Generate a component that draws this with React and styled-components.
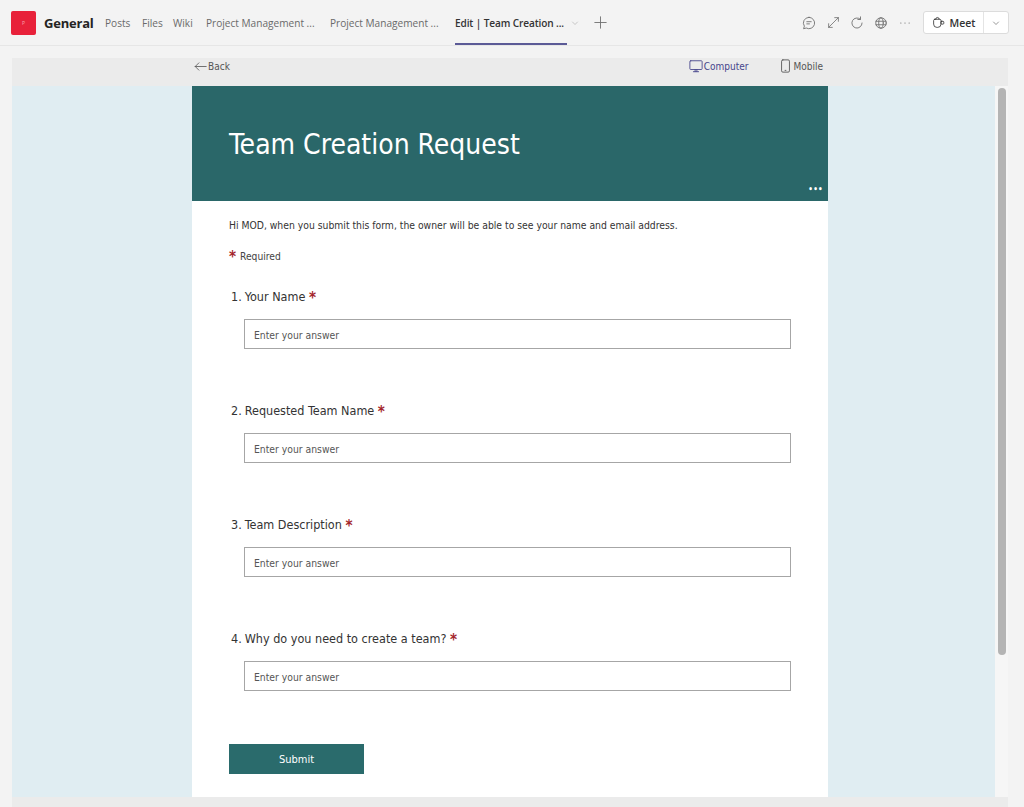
import React from "react";
import styled, { createGlobalStyle } from "styled-components";

const Global = createGlobalStyle`
  html, body { margin: 0; height: 100%; background: #f3f3f3; overflow: hidden; }
  #root { height: 100%; }
  * { box-sizing: border-box; }
`;
const Page = styled.div`
  width: 1024px; height: 807px; display: flex; flex-direction: column; background: #f3f3f3;
  font-family: "Open Sans", "Noto Sans", sans-serif; color: #252423;
`;
const TopBar = styled.header`
  height: 46px; flex: none; display: flex; align-items: center; padding: 0 15px 0 11px;
  border-bottom: 1px solid #e6e6e6; margin-bottom: 12px;
`;
const Logo = styled.div`
  width: 25px; height: 24px; border-radius: 2px; background: #e8213a; color: #f7a0aa;
  font-size: 5px; display: flex; align-items: center; justify-content: center; margin-right: 8px;
`;
const Channel = styled.div`
  font-size: 13px; font-weight: 700; color: #252423; margin-right: 11px; letter-spacing: -0.2px; width: 50px; white-space: nowrap;
`;
const Tab = styled.div`
  position: relative; height: 45px; display: flex; align-items: center; flex: none;
  font-size: 10.1px; white-space: nowrap;
  margin-right: ${p => p.$gap}px; width: ${p => p.$w}px;
  letter-spacing: ${p => p.$active ? "-0.12px" : "0"};
  color: ${p => p.$active ? "#333" : "#6a6a6a"}; font-weight: ${p => p.$active ? 600 : 400};
  ${p => p.$active && `&::after { content: ""; position: absolute; left: 0; right: 0; bottom: 0; height: 2px; background: #5b5a96; }`}
`;
const Spacer = styled.div`flex: 1;`;
const IconBtn = styled.span`
  display: inline-flex; flex: none; width: ${p => p.$w || 24}px; justify-content: center; color: ${p => p.$c || "#6e6e6e"};
`;
const MeetGroup = styled.div`
  display: flex; height: 23px; width: 86px; margin-left: 6px; background: #fff; border: 1px solid #dcdcdc;
  border-radius: 3px; font-size: 10.5px; font-weight: 600; color: #333;
`;
const MeetMain = styled.div`
  flex: 1; display: flex; align-items: center; justify-content: center; gap: 5px; border-right: 1px solid #e4e4e4;
`;
const MeetCaret = styled.div`width: 24px; display: flex; align-items: center; justify-content: center;`;
const Frame = styled.main`
  margin: 0 16px 0 12px; flex: 1; display: flex; flex-direction: column; min-height: 0;
`;
const Toolbar = styled.div`
  height: 28px; flex: none; background: #ebebeb; display: flex; align-items: center;
  padding: 0 185px 12px 182px; font-family: "DejaVu Sans Condensed", "DejaVu Sans", sans-serif; font-size: 10px; color: #555;
`;
const ToolItem = styled.div`
  display: flex; align-items: center; gap: ${p => p.$gap}px; color: ${p => p.$active ? "#46458c" : "#555"};
  margin-left: ${p => p.$ml || 0}px;
`;
const Body = styled.div`flex: 1; display: flex; min-height: 0; background: #e0edf2;`;
const Canvas = styled.div`flex: 1; padding-left: 180px; overflow: hidden;`;
const Track = styled.div`width: 13px; flex: none; background: #f6f6f6; padding: 2px 2px 0 3px;`;
const Thumb = styled.div`height: 567px; background: #b4b4b4; border-radius: 4px;`;
const Form = styled.div`
  width: 636px; height: 100%; background: #fff; font-family: "DejaVu Sans Condensed", "DejaVu Sans", sans-serif; color: #333;
`;
const Banner = styled.div`
  position: relative; height: 115px; background: #2a6769; color: #fff; display: flex; align-items: center; padding: 2px 0 0 37px;
`;
const Title = styled.h1`margin: 0; font-size: 28px; font-weight: 400;`;
const More = styled.span`position: absolute; right: 5px; bottom: 3px; font-size: 8px; font-weight: 700; line-height: 16px; letter-spacing: 0.3px;`;
const Content = styled.div`padding: 16px 37px 0;`;
const Intro = styled.div`font-size: 10.3px; line-height: 16px; color: #333;`;
const Required = styled.div`display: flex; align-items: center; gap: 4px; margin-top: 16px; font-size: 10.2px; line-height: 16px; color: #444;`;
const Star = styled.span`color: #a4262c; font-size: 15px; line-height: 14px; font-weight: 700; vertical-align: -2px;`;
const Question = styled.div`margin-top: ${p => p.$first ? 21 : 0}px; height: 114px; padding-left: 2px;`;
const Label = styled.div`display: flex; gap: 3px; font-size: 12.5px; line-height: 20px; height: 21px; padding-top: 1px; color: #333;`;
const Answer = styled.input`
  display: block; margin: 12px 0 0 13px; width: 547px; height: 30px; border: 1px solid #a6a6a6; padding: 2px 9px 0; outline: none; background: #fff;
  font: 400 10.3px "DejaVu Sans Condensed", "DejaVu Sans", sans-serif;
  &::placeholder { color: #555; opacity: 1; }
`;
const Submit = styled.button`
  display: block; margin-top: 2px; width: 135px; height: 30px; border: 0; background: #2a6b6c; color: #fff;
  font: 400 11px "DejaVu Sans Condensed", "DejaVu Sans", sans-serif;
`;
const Footer = styled.div`height: 10px; flex: none; background: #ebebeb;`;

const Icon = ({ w = 14, h = 14, vb = "0 0 16 16", sw = 1, children }) => (
  <svg width={w} height={h} viewBox={vb} fill="none" stroke="currentColor" strokeWidth={sw} strokeLinecap="round" strokeLinejoin="round">{children}</svg>
);
const questions = ["Your Name", "Requested Team Name", "Team Description", "Why do you need to create a team?"];

export default function App() {
  return (
    <Page>
      <Global />
      <TopBar>
        <Logo>P</Logo>
        <Channel>General</Channel>
        <Tab $w={25} $gap={12}>Posts</Tab>
        <Tab $w={20} $gap={11}>Files</Tab>
        <Tab $w={21} $gap={12}>Wiki</Tab>
        <Tab $w={108} $gap={16}>Project Management ...</Tab>
        <Tab $w={108} $gap={17}>Project Management ...</Tab>
        <Tab $active $w={112} $gap={0}>Edit | Team Creation ...</Tab>
        <IconBtn $c="#999" $w={16}><Icon w={8} h={8}><path d="M3 6l5 5 5-5" /></Icon></IconBtn>
        <IconBtn $w={34}><Icon w={13} h={13} sw={1.1}><path d="M8 1v14M1 8h14" /></Icon></IconBtn>
        <Spacer />
        <IconBtn><Icon><path d="M8 1.500a6.500 6.500 0 1 1-3.200 12.200L1.800 14.600l.9-3A6.500 6.500 0 0 1 8 1.500z" /><path d="M5.500 6.500h5M5.500 9h3" /></Icon></IconBtn>
        <IconBtn><Icon w={13} h={13}><path d="M9.500 2H14v4.500M14 2L2 14M2 9.500V14h4.500" /></Icon></IconBtn>
        <IconBtn><Icon><path d="M13.800 8A5.800 5.800 0 1 1 11.800 3.600" /><path d="M12 1v3H9" /></Icon></IconBtn>
        <IconBtn><Icon><circle cx="8" cy="8" r="6" /><ellipse cx="8" cy="8" rx="2.600" ry="6" /><path d="M2.200 6h11.600M2.200 10h11.600" /></Icon></IconBtn>
        <IconBtn $c="#555"><Icon w={12} h={12} sw={1.4}><path d="M2.500 8h.01M8 8h.01M13.500 8h.01" /></Icon></IconBtn>
        <MeetGroup>
          <MeetMain>
            <Icon w={13} h={13}><path d="M3.500 4h6a1.500 1.500 0 0 1 1.500 1.500V10a4 4 0 0 1-4 4H6a4 4 0 0 1-4-4V5.500A1.500 1.500 0 0 1 3.500 4zM4.500 4a2.200 2.200 0 0 1 4.400 0" /><rect x="11" y="6.500" width="3.500" height="3.500" rx="1" /></Icon>
            Meet
          </MeetMain>
          <MeetCaret><Icon w={8} h={8}><path d="M3 6l5 5 5-5" /></Icon></MeetCaret>
        </MeetGroup>
      </TopBar>
      <Frame>
        <Toolbar>
          <ToolItem $gap={1}><Icon w={13} h={13}><path d="M15 8H1.500M6 3.500L1.500 8 6 12.500" /></Icon>Back</ToolItem>
          <Spacer />
          <ToolItem $active $gap={1}><Icon w={14} h={14}><rect x="1" y="2" width="14" height="10" rx="1" /><path d="M5 14.500h6M7 12v2.500M9 12v2.500" /></Icon>Computer</ToolItem>
          <ToolItem $gap={3} $ml={33}><Icon w={9} h={14} vb="3 0 10 16"><rect x="3.500" y="1" width="9" height="14" rx="1.500" /><path d="M7.500 13h1" /></Icon>Mobile</ToolItem>
        </Toolbar>
        <Body>
          <Canvas>
            <Form>
              <Banner>
                <Title>Team Creation Request</Title>
                <More>•••</More>
              </Banner>
              <Content>
                <Intro>Hi MOD, when you submit this form, the owner will be able to see your name and email address.</Intro>
                <Required><Star>*</Star>Required</Required>
                {questions.map((q, i) => (
                  <Question key={q} $first={i === 0}>
                    <Label><span>{i + 1}.</span><span>{q} <Star>*</Star></span></Label>
                    <Answer placeholder="Enter your answer" readOnly />
                  </Question>
                ))}
                <Submit>Submit</Submit>
              </Content>
            </Form>
          </Canvas>
          <Track><Thumb /></Track>
        </Body>
        <Footer />
      </Frame>
    </Page>
  );
}
